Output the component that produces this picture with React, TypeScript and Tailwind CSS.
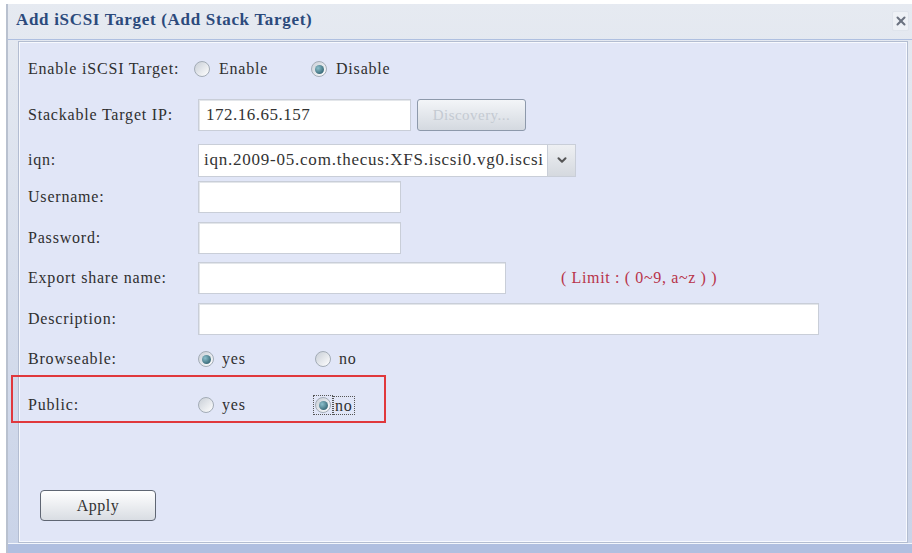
import { ChevronDown, X } from "lucide-react"

function Radio({ checked, focus }: { checked?: boolean; focus?: boolean }) {
  return (
    <span className={focus ? "flex p-px outline-1 outline-dotted outline-[#555]" : "flex"}>
      <span className="flex h-[16px] w-[16px] items-center justify-center rounded-full border border-[#a3acb6] bg-linear-to-br from-[#c9cfd7] to-white">
        {checked && (
          <span className="h-[9px] w-[9px] rounded-full bg-[radial-gradient(circle_at_35%_35%,#8cc0cc,#1d4d5c)]" />
        )}
      </span>
    </span>
  )
}

function Field({ w, value }: { w: string; value?: string }) {
  return (
    <div className={`${w} flex h-[32px] items-center border border-[#c9ced8] bg-white px-[7px] text-[17px] tracking-[0.03em] text-[#333] shadow-[inset_1px_1px_0_#e3e6ea]`}>
      {value}
    </div>
  )
}

function Row({ label, children, className = "" }: { label: string; children?: React.ReactNode; className?: string }) {
  return (
    <div className={`relative flex h-[34px] items-center pl-[9px] ${className}`}>
      <div className="w-[170px] shrink-0 text-[16px] tracking-[0.05em] text-[#2f2f2f]">{label}</div>
      {children}
    </div>
  )
}

export default function App() {
  return (
    <div className="h-[553px] w-[912px] overflow-hidden bg-white pl-[6px] pt-[4px] font-['Liberation_Serif',serif]">
      <div className="flex h-[549px] flex-col border-l-2 border-[#b9c1cf] bg-linear-to-b from-[#e6eaf1] to-[#c9d3e8]">
        {/* Title bar */}
        <div className="flex h-[36px] shrink-0 items-start justify-between border-b border-[#aebfe0] pl-[8px] pr-[3px] pt-[3px]">
          <span className="text-[17px] font-bold tracking-[0.04em] text-[#2c4a7c]">
            Add iSCSI Target (Add Stack Target)
          </span>
          <span className="mt-[4px] flex h-[20px] w-[17px] items-center justify-center rounded-[2px] border border-[#dfe4ec] bg-[#eef1f6]">
            <X className="h-[14px] w-[14px] text-[#6b7280]" strokeWidth={3.5} />
          </span>
        </div>

        {/* Content panel */}
        <div className="ml-[10px] mr-[4px] mt-[1px] flex h-[502px] flex-col border border-[#b3bdd1] bg-[#e1e6f7] shadow-[inset_1px_1px_0_#f7f9fe,inset_-1px_-1px_0_#f7f9fe] pt-[10px]">
          <Row label="Enable iSCSI Target:">
            <div className="-ml-[4px] flex items-center text-[16px] tracking-[0.05em] text-[#2f2f2f]">
              <Radio />
              <span className="ml-[9px] w-[92px]">Enable</span>
              <Radio checked />
              <span className="ml-[9px]">Disable</span>
            </div>
          </Row>

          <Row label="Stackable Target IP:" className="mt-[12px]">
            <Field w="w-[213px]" value="172.16.65.157" />
            <button className="ml-[6px] h-[32px] w-[109px] rounded-[3px] border border-[#8d99ab] bg-linear-to-b from-[#f3f5f8] to-[#d4d9e0] text-[15px] tracking-[0.03em] text-[#c4cad2]">
              Discovery...
            </button>
          </Row>

          <Row label="iqn:" className="mt-[11px]">
            <div className="flex h-[33px] w-[378px] border border-[#c9ced8] bg-white">
              <span className="flex flex-1 items-center overflow-hidden whitespace-nowrap px-[5px] text-[17px] tracking-[0.045em] text-[#333]">
                iqn.2009-05.com.thecus:XFS.iscsi0.vg0.iscsi
              </span>
              <span className="flex w-[28px] shrink-0 items-center justify-center border-l border-[#c9ced8] bg-linear-to-b from-[#eef0f3] to-[#d5d9df]">
                <ChevronDown className="h-[14px] w-[14px] text-[#555]" strokeWidth={3.5} />
              </span>
            </div>
          </Row>

          <Row label="Username:" className="mt-[3px]">
            <Field w="w-[203px]" />
          </Row>

          <Row label="Password:" className="mt-[7px]">
            <Field w="w-[203px]" />
          </Row>

          <Row label="Export share name:" className="mt-[6px]">
            <Field w="w-[308px]" />
            <span className="ml-[55px] text-[16px] tracking-[0.04em] text-[#b8334a]">( Limit : ( 0~9, a~z ) )</span>
          </Row>

          <Row label="Description:" className="mt-[7px]">
            <Field w="w-[621px]" />
          </Row>

          <Row label="Browseable:" className="mt-[6px]">
            <div className="flex items-center text-[16px] tracking-[0.05em] text-[#2f2f2f]">
              <Radio checked />
              <span className="ml-[8px] w-[93px]">yes</span>
              <Radio />
              <span className="ml-[8px]">no</span>
            </div>
          </Row>

          <Row label="Public:" className="mt-[12px]">
            <div className="flex items-center text-[16px] tracking-[0.05em] text-[#2f2f2f]">
              <Radio />
              <span className="ml-[8px] w-[92px]">yes</span>
              <Radio checked focus />
              <span className="ml-[2px] px-px leading-[17px] outline-1 outline-dotted outline-[#555]">no</span>
            </div>
            <div className="pointer-events-none absolute -left-[8px] -top-[13px] h-[48px] w-[375px] border-2 border-[#e0383c]" />
          </Row>

          <div className="mt-[68px] pl-[21px]">
            <button className="h-[31px] w-[116px] rounded-[4px] border border-[#5f6673] bg-linear-to-b from-white to-[#d9dde3] text-[16px] tracking-[0.03em] text-[#333]">
              Apply
            </button>
          </div>
        </div>

        <div className="flex-1 border-t border-[#f3f6fc] bg-[#b0bfe0]" />
      </div>
    </div>
  )
}
